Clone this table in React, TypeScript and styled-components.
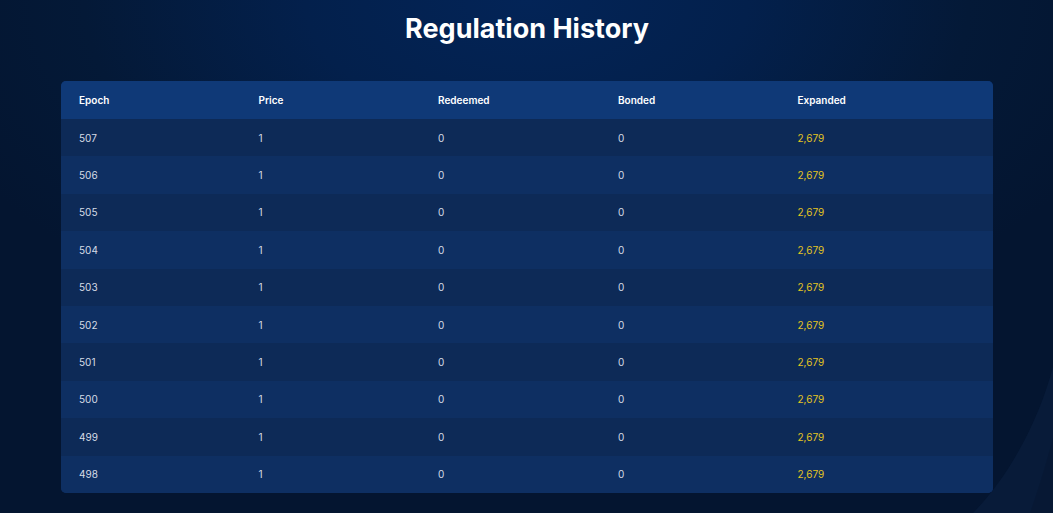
import React from "react";
import styled, { createGlobalStyle } from "styled-components";

const Global = createGlobalStyle`
  html, body { margin: 0; padding: 0; }
  body {
    font-family: "Inter", "Noto Sans", "Liberation Sans", sans-serif;
    background: #041630;
  }
`;

const Page = styled.div`
  position: relative;
  min-height: 513px;
  overflow: hidden;
  background:
    radial-gradient(ellipse 60% 70% at 50% 0%, #032457 0%, #03204c 35%, #041937 70%, #041530 100%);
`;

const Decoration = styled.svg`
  position: absolute;
  right: 0;
  bottom: 0;
  width: 120px;
  height: 220px;
  pointer-events: none;
`;

const Content = styled.main`
  position: relative;
  display: flex;
  flex-direction: column;
  align-items: center;
  padding: 12px 60px 20px 61px;
`;

const Title = styled.h1`
  margin: 0 0 35px;
  font-family: "Inter", "Noto Sans", sans-serif;
  font-weight: 700;
  font-size: 27px;
  line-height: 34px;
  color: #ffffff;
  letter-spacing: 0px;
`;

const Table = styled.div`
  width: 932px;
  border-radius: 5px;
  overflow: hidden;
  background: #0e2f62;
`;

const Row = styled.div<{ $variant: "head" | "odd" | "even" }>`
  display: grid;
  grid-template-columns: 179.5px 179.5px 180px 179.5px 1fr;
  align-items: center;
  padding-left: 18px;
  height: ${(p) => (p.$variant === "head" ? "38px" : "37.4px")};
  background: ${(p) =>
    p.$variant === "head" ? "#0f3977" : p.$variant === "odd" ? "#0d2a57" : "#0e2f62"};
`;

const HeadCell = styled.div`
  font-size: 10px;
  font-weight: 600;
  color: #ffffff;
`;

const Cell = styled.div<{ $accent?: boolean }>`
  font-size: 10px;
  font-weight: 400;
  color: ${(p) => (p.$accent ? "#e3c41f" : "#d6dce6")};
`;

const epochs = [507, 506, 505, 504, 503, 502, 501, 500, 499, 498];

export default function App() {
  return (
    <>
      <Global />
      <Page>
        <Decoration viewBox="0 0 120 220" aria-hidden="true">
          <path d="M120 74 C 108 120, 80 180, 40 220 L 120 220 Z" fill="#0a1e3c" opacity="0.75" />
          <path d="M120 145 C 112 175, 104 200, 97 220 L 120 220 Z" fill="#061832" opacity="0.6" />
        </Decoration>
        <Content>
          <Title>Regulation History</Title>
          <Table>
            <Row $variant="head">
              <HeadCell>Epoch</HeadCell>
              <HeadCell>Price</HeadCell>
              <HeadCell>Redeemed</HeadCell>
              <HeadCell>Bonded</HeadCell>
              <HeadCell>Expanded</HeadCell>
            </Row>
            {epochs.map((e, i) => (
              <Row key={e} $variant={i % 2 === 0 ? "odd" : "even"}>
                <Cell>{e}</Cell>
                <Cell>1</Cell>
                <Cell>0</Cell>
                <Cell>0</Cell>
                <Cell $accent>2,679</Cell>
              </Row>
            ))}
          </Table>
        </Content>
      </Page>
    </>
  );
}
